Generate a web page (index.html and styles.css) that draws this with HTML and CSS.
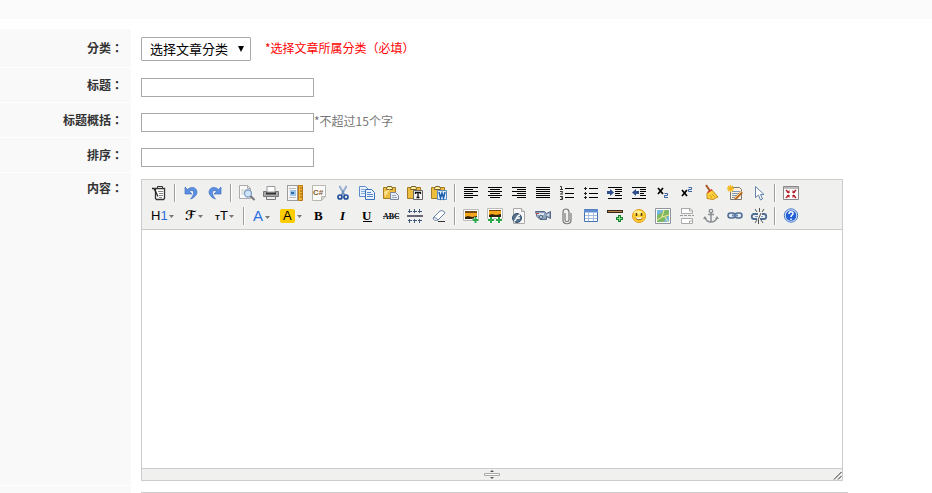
FILE: index.html
```html
<!DOCTYPE html>
<html lang="zh-Hant">
<head>
    <meta charset="UTF-8">
    <meta name="viewport" content="width=device-width, initial-scale=1.0">
    <title>文章</title>
    <link rel="stylesheet" href="styles.css">
</head>
<body>
    <div class="topbar"></div>

    <form class="article-form">
        <div class="row row-category">
            <label class="name" for="category">分类：</label>
            <div class="field">
                <span class="select-box">
                    <select id="category">
                        <option>选择文章分类</option>
                    </select>
                </span>
                <span class="required">*选择文章所属分类（必填）</span>
            </div>
        </div>
        <div class="row">
            <label class="name" for="title">标题：</label>
            <div class="field"><input type="text" id="title"></div>
        </div>
        <div class="row">
            <label class="name" for="summary">标题概括：</label>
            <div class="field"><input type="text" id="summary"><span class="tip">*不超过15个字</span></div>
        </div>
        <div class="row">
            <label class="name" for="sort">排序：</label>
            <div class="field"><input type="text" id="sort"></div>
        </div>

        <div class="row row-content">
            <label class="name" for="content">内容：</label>
            <div class="field">
                <div class="editor">
                    <div class="toolbar">
                        <!-- first line of tools -->
                        <div class="tools">
                            <button type="button" title="HTML代码"><svg width="16" height="16"><path d="M4.500 3.500h9v10l-1 1h-7l-1-1z" fill="#fff" stroke="#333" stroke-width="1.300"/><path d="M6.500 1.500h5v2h-5z" fill="#ddd" stroke="#333"/><path d="M7 6.500h5M8 8.500h4M8 10.500h4M8 12.500h3" stroke="#888"/><path d="M1 3.500h2l4 8" fill="none" stroke="#222" stroke-width="1.300"/></svg></button>
                            <span class="sep"></span>
                            <button type="button" title="后退"><svg width="16" height="16"><path d="M2 2v7h7L6.500 6.500C9 4.500 11 6 10.500 8.500 10 11 9 12 7.500 14 11 13 14 10 14 7 13.500 2 8 1 4.500 4.500z" fill="#5b8fe0" stroke="#2f65bd" stroke-width=".6"/></svg></button>
                            <button type="button" title="前进"><svg width="16" height="16"><path d="M14 2v7H7l2.500-2.500C7 4.500 5 6 5.500 8.500 6 11 7 12 8.500 14 5 13 2 10 2 7 2.500 2 8 1 11.500 4.500z" fill="#5b8fe0" stroke="#2f65bd" stroke-width=".6"/></svg></button>
                            <span class="sep"></span>
                            <button type="button" title="预览"><svg width="16" height="16"><path d="M.5.5h8l3 3v10H.5z" fill="#fafafa" stroke="#aaa"/><path d="M8.500.5v3h3" fill="none" stroke="#aaa"/><path d="M2 5h6M2 7h5M2 9h4" stroke="#ccc"/><circle cx="9" cy="8.500" r="3.500" fill="#cfe5fa" stroke="#7f9fc5" stroke-width="1.300"/><path d="M11.500 11l4 4" stroke="#777" stroke-width="2"/></svg></button>
                            <button type="button" title="打印"><svg width="16" height="16"><path d="M4 1.500h8V7H4z" fill="#fff" stroke="#999"/><path d="M.5 6.500h3v2h9v-2h3v5H.5z" fill="#aaa" stroke="#777"/><path d="M3 8.500h10" stroke="#333" stroke-width="2"/><path d="M3.500 11.500h9v3h-9z" fill="#eee" stroke="#777"/></svg></button>
                            <button type="button" title="插入模板"><svg width="16" height="16"><path d="M.5.5h10v15H.5z" fill="#f6f6f6" stroke="#444" stroke-dasharray="1 1"/><path d="M3 5h6v6H3z" fill="#9fc3e8"/><path d="M4 7h3v2H4z" fill="#316aa8"/><path d="M2 3.500h7M2 12.500h7" stroke="#bbb"/><path d="M11.500.5h4v15h-4z" fill="#f3b735" stroke="#b97812"/><path d="M13 3h2M13 6h2M13 9h2M13 12h2" stroke="#8b5710"/></svg></button>
                            <button type="button" title="插入程序代码"><svg width="16" height="16"><path d="M1.500.5h13v11l-4 4h-9z" fill="#fbfbfa" stroke="#b8b6ad"/><path d="M10.500 15.500v-4h4z" fill="#ddd" stroke="#b8b6ad"/><text class="code-mark" x="2" y="10">C#</text></svg></button>
                            <button type="button" title="剪切"><svg width="16" height="16"><path d="M4.500 1l5 9M11.500 1l-5 9" stroke="#6e8fbd" stroke-width="1.700"/><path d="M5 1l2 5M11 1L9 6" stroke="#c8d8ea" stroke-width=".7"/><circle cx="5" cy="12" r="2" fill="none" stroke="#234f9b" stroke-width="1.700"/><circle cx="11" cy="12" r="2" fill="none" stroke="#234f9b" stroke-width="1.700"/></svg></button>
                            <button type="button" title="复制"><svg width="16" height="16"><path d="M.5 1.500h6l3 3v7h-9z" fill="#e8f1fd" stroke="#5c8acb"/><path d="M2 4.500h4M2 6.500h5M2 8.500h4" stroke="#83a9dc"/><path d="M6.500 4.500h6l3 3v7h-9z" fill="#e8f1fd" stroke="#3d70bc"/><path d="M8 7.500h4M8 9.500h6M8 11.500h6" stroke="#5688cc"/></svg></button>
                            <button type="button" title="粘贴"><svg width="16" height="16"><path d="M.5 2.500h12v11H.5z" fill="#edbd40" stroke="#a47a22"/><path d="M3.500 3.500l1-2h4l1 2v1h-6z" fill="#fff0a2" stroke="#765c25"/><path d="M1 7l6-3-5 8z" fill="#fbe192"/><path d="M7.500 7.500h5l3 3v4h-8z" fill="#e7edf3" stroke="#7886a0"/><path d="M9 10.500h4M9 12.500h5" stroke="#98a5ba"/></svg></button>
                            <button type="button" title="粘贴为无格式文本"><svg width="16" height="16"><path d="M.5 2.500h13v11H.5z" fill="#edbd40" stroke="#a47a22"/><path d="M3.500 3.500l1-2h4l1 2v1h-6z" fill="#fff0a2" stroke="#765c25"/><path d="M6.500 5.500h9v9h-9z" fill="#f5f5f5" stroke="#666"/><path d="M8.500 9v-1.500h5V9M11 7.500v5M9.500 12.500h3" fill="none" stroke="#111" stroke-width="1.300"/></svg></button>
                            <button type="button" title="从Word粘贴"><svg width="16" height="16"><path d="M.5 2.500h13v11H.5z" fill="#edbd40" stroke="#a47a22"/><path d="M3.500 3.500l1-2h4l1 2v1h-6z" fill="#fff0a2" stroke="#765c25"/><path d="M6.500 5.500h9v9h-9z" fill="#e7f2ff" stroke="#5c8cc5"/><path d="M8 7l1.500 6L11 8l1.500 5L14 7" fill="none" stroke="#1b5eae" stroke-width="1.500"/></svg></button>
                            <span class="sep"></span>
                            <button type="button" title="左对齐"><svg width="16" height="16"><path d="M1 2.500h14M1 4.500h9M1 6.500h14M1 8.500h9M1 10.500h14M1 12.500h9" stroke="#000"/></svg></button>
                            <button type="button" title="居中"><svg width="16" height="16"><path d="M1 2.500h14M3 4.500h10M1 6.500h14M3 8.500h10M1 10.500h14M3 12.500h10" stroke="#000"/></svg></button>
                            <button type="button" title="右对齐"><svg width="16" height="16"><path d="M1 2.500h14M6 4.500h9M1 6.500h14M6 8.500h9M1 10.500h14M6 12.500h9" stroke="#000"/></svg></button>
                            <button type="button" title="两端对齐"><svg width="16" height="16"><path d="M1 2.500h14M1 4.500h14M1 6.500h14M1 8.500h14M1 10.500h14M1 12.500h14" stroke="#000"/></svg></button>
                            <button type="button" title="编号"><svg width="16" height="16"><path d="M6 3.500h9M6 8.500h9M6 12.500h9" stroke="#000"/><path d="M1 1.500h1.500v3M1 4.500h3M1 6.500h2.500v1L1.500 9H4M1 11.500h2.500v3H1M2 13h1.500" fill="none" stroke="#333"/></svg></button>
                            <button type="button" title="项目符号"><svg width="16" height="16"><path d="M6 3.500h9M6 8.500h9M6 12.500h9" stroke="#000"/><path d="M1 3.500h3M1 8.500h3M1 12.500h3M2.500 2v3M2.500 7v3M2.500 11v3" stroke="#222"/></svg></button>
                            <button type="button" title="增加缩进"><svg width="16" height="16"><path d="M1 2.500h14M8 4.500h7M8 6.500h7M8 8.500h5M8 10.500h7M1 13.500h14" stroke="#000"/><path d="M0 6h3V4l4 3.500L3 11V9H0z" fill="#304f8d"/></svg></button>
                            <button type="button" title="减少缩进"><svg width="16" height="16"><path d="M1 2.500h14M9 4.500h6M9 6.500h6M9 8.500h4M9 10.500h6M1 13.500h14" stroke="#000"/><path d="M8 6H5V4L1 7.500 5 11V9h3z" fill="#304f8d"/></svg></button>
                            <button type="button" title="下标"><svg width="16" height="16"><path d="M3 3l5 6M8 3L3 9" stroke="#000" stroke-width="1.700"/><path d="M9.500 8.500h3v2h-3v2h3.500" fill="none" stroke="#3c62a6"/></svg></button>
                            <button type="button" title="上标"><svg width="16" height="16"><path d="M3 5l5 6M8 5l-5 6" stroke="#000" stroke-width="1.700"/><path d="M9.500 2.500h3v2h-3v2h3.500" fill="none" stroke="#3c62a6"/></svg></button>
                            <button type="button" title="清理HTML代码"><svg width="16" height="16"><path d="M3 0l4 6" stroke="#a65928" stroke-width="2"/><path d="M4 8l5-3 6 7-5 2.500-6-1z" fill="#ffd13c" stroke="#c88b1b"/><path d="M4.500 7.500l4.500-3" stroke="#d63e25" stroke-width="1.500"/><path d="M7 10l2 3M9 9l3 3" stroke="#d19a22"/></svg></button>
                            <button type="button" title="一键排版"><svg width="16" height="16"><path d="M3.500 2.500h9l2 2v10h-11z" fill="#fff0d5" stroke="#777"/><path d="M5 6.500h8M5 8.500h7M5 10.500h6M5 12.500h4" stroke="#779bc4"/><path d="M3.500 0v7M0 3.500h7M1 1l5 5M6 1L1 6" stroke="#f3b619" stroke-width="1.300"/><path d="M15 7l-7 7" stroke="#b36527" stroke-width="2.500"/><path d="M14.500 6.500l-7 7" stroke="#ffd077"/></svg></button>
                            <button type="button" title="全选"><svg width="16" height="16"><path d="M4.500 1.500v11l3-2.500 2 5 2-1-2-4.500h3.500z" fill="#fff" stroke="#6482ac"/></svg></button>
                            <span class="sep"></span>
                            <button type="button" title="全屏显示"><svg width="16" height="16"><path d="M.5 1.500h15v13H.5z" fill="#fff" stroke="#888"/><path d="M1 3h14" stroke="#bbb" stroke-width="2"/><path d="M6.500 5v3h-3zM9.500 5v3h3zM6.500 13v-3h-3zM9.500 13v-3h3z" fill="#b81f26"/><path d="M3 5l3 3M13 5l-3 3M3 13l3-3M13 13l-3-3" stroke="#b81f26" stroke-width="1.500"/></svg></button>
                        </div>
                        <!-- second line of tools -->
                        <div class="tools">
                            <button type="button" title="段落"><svg width="25" height="16"><text x="0" y="12">H<tspan class="blue">1</tspan></text><path d="M18 7h5l-2.500 3z" fill="#777"/></svg></button>
                            <button type="button" title="字体"><svg width="21" height="16"><text class="script" x="1" y="12">ℱ</text><path d="M14 7h5l-2.500 3z" fill="#777"/></svg></button>
                            <button type="button" title="文字大小"><svg width="23" height="16"><text x="2" y="12"><tspan class="small">T</tspan>T</text><path d="M16 7h5l-2.500 3z" fill="#777"/></svg></button>
                            <span class="sep"></span>
                            <button type="button" title="文字颜色"><svg width="20" height="16"><text class="blue large" x="1" y="13">A</text><path d="M13 8h5l-2.500 3z" fill="#777"/></svg></button>
                            <button type="button" title="文字背景"><svg width="23" height="16"><rect x="0" y="1" width="15" height="14" rx="2" fill="#fc0"/><text x="3" y="12">A</text><path d="M17 7h5l-2.500 3z" fill="#777"/></svg></button>
                            <button type="button" title="粗体"><svg width="16" height="16"><text class="serif" x="3" y="12">B</text></svg></button>
                            <button type="button" title="斜体"><svg width="16" height="16"><text class="serif italic" x="5" y="12">I</text></svg></button>
                            <button type="button" title="下划线"><svg width="16" height="16"><text class="serif" x="3" y="12">U</text><path d="M4 13.500h9" stroke="#000"/></svg></button>
                            <button type="button" title="删除线"><svg width="16" height="16"><text class="strike" x="0" y="11">ABC</text><path d="M0 8.500h16" stroke="#345"/></svg></button>
                            <button type="button" title="行距"><svg width="16" height="16"><path d="M0 8h16" stroke="#667" stroke-width="2"/><path d="M1 3.500h4M6 3.500h4M11 3.500h4M1 12.500h4M6 12.500h4M11 12.500h4" stroke="#405a7d"/><path d="M2.500 1v4M7.500 1v4M12.500 1v4M2.500 11v4M7.500 11v4M12.500 11v4" stroke="#405a7d"/></svg></button>
                            <button type="button" title="删除格式"><svg width="16" height="16"><path d="M2 10l7-7c1-1 5 0 5 2l-7 7c-2 1-5 0-5-2z" fill="#fff" stroke="#6881a5"/><path d="M2 10c2-1 4 0 5 2" fill="none" stroke="#6881a5"/><path d="M7 13.500h7" stroke="#333"/></svg></button>
                            <span class="sep"></span>
                            <button type="button" title="图片"><svg width="16" height="16"><path d="M.5 1.500h15v11H.5z" fill="#fff" stroke="#bbb"/><path d="M2 3h12v8H2z" fill="#f6a719"/><path d="M2 9l3-1 4 1 5-1v3H2z" fill="#30230c"/><path d="M2 3h12v2H2z" fill="#754c18"/><path d="M12.500 9v6M9.500 12h6" stroke="#fff" stroke-width="3"/><path d="M12.500 9v6M9.500 12h6" stroke="#2aa84a" stroke-width="2"/></svg></button>
                            <button type="button" title="批量图片上传"><svg width="16" height="16"><path d="M.5.500h15v10H.5z" fill="#fff" stroke="#bbb"/><path d="M2 2h12v7H2z" fill="#f6a719"/><path d="M2 7l3-1 4 1 5-1v3H2z" fill="#30230c"/><path d="M2 2h12v1H2z" fill="#754c18"/><path d="M4 9v6M1 12h6M12 9v6M9 12h6" stroke="#fff" stroke-width="3"/><path d="M4 9v6M1 12h6M12 9v6M9 12h6" stroke="#2aa84a" stroke-width="2"/></svg></button>
                            <button type="button" title="Flash"><svg width="16" height="16"><path d="M2.500.5h8l3 3v12h-11z" fill="#f8f8f8" stroke="#aaa"/><path d="M10.500.5v3h3" fill="#ddd" stroke="#aaa"/><circle cx="6" cy="10" r="4.500" fill="#58748e" stroke="#304d6a"/><path d="M3 13c3 0 2-6 6-6M5 10h4" fill="none" stroke="#fff" stroke-width="1.500"/></svg></button>
                            <button type="button" title="视音频"><svg width="16" height="16"><path d="M.5 3.500h9l2 2 4-2v7l-4-2v3H5l-3-3z" fill="#8ea3bd" stroke="#506682"/><path d="M2 5h7v2H2z" fill="#d5e0ec"/><circle cx="6" cy="9" r="1.500" fill="#e8edf3" stroke="#49617f"/><path d="M12 6.500l2-1v3l-2-1z" fill="#d5e0ec"/><path d="M1 5.500h3" stroke="#b44"/></svg></button>
                            <button type="button" title="插入文件"><svg width="16" height="16"><path d="M6 5v7c0 2 4 2 4 0V4c0-4-6-4-6 0v8c0 5 8 5 8 0V5" fill="none" stroke="#777" stroke-width="1.200"/></svg></button>
                            <button type="button" title="表格"><svg width="16" height="16"><path d="M1.500 1.500h13v12h-13z" fill="#fff" stroke="#4774b5"/><path d="M1 3h14" stroke="#5e8ed1" stroke-width="3"/><path d="M5.500 5v8M10.500 5v8M2 7.500h12M2 10.500h12" stroke="#a4bddf"/></svg></button>
                            <button type="button" title="插入横线"><svg width="16" height="16"><path d="M0 2h16v3H0z" fill="#362718"/><path d="M1 3.500h14" stroke="#b98a54"/><path d="M12.500 7v7M9 10.500h7" stroke="#178332" stroke-width="3"/><path d="M12.500 8v5M10 10.500h5" stroke="#83df87"/></svg></button>
                            <button type="button" title="插入表情"><svg width="16" height="16"><circle cx="8" cy="8" r="6.500" fill="#ffd033" stroke="#e69b16"/><ellipse cx="7" cy="4.500" rx="4" ry="2" fill="#ffec8a"/><path d="M5.500 5v3M10.500 5v3" stroke="#573b0b" stroke-width="1.500"/><path d="M4 9.500c2 3 6 3 8 0" fill="#fff" stroke="#9b5f13"/></svg></button>
                            <button type="button" title="百度地图"><svg width="16" height="16"><path d="M.5.5h15v15H.5z" fill="#fff" stroke="#8e969b"/><path d="M2 2h12v12H2z" fill="#78b5e2"/><path d="M2 7l4-2 3-3h5v6l-3 1-2 5H2z" fill="#7fb865"/><path d="M2 12l5-3 2-7M7 9l7-2M10 9l3 5" fill="none" stroke="#f7eb9a"/></svg></button>
                            <button type="button" title="插入分页符"><svg width="16" height="16"><path d="M2.500 0v5.500h11v-3L11 .5H3M2.500 15.500v-5h11v5z" fill="#fff" stroke="#aaa"/><path d="M10.500 0v3h3M10.500 15v-2h3" fill="none" stroke="#aaa"/><path d="M1 7.500h14" stroke="#999" stroke-dasharray="3 1"/></svg></button>
                            <button type="button" title="锚点"><svg width="16" height="16"><circle cx="8" cy="3" r="1.700" fill="none" stroke="#8a9096" stroke-width="1.300"/><path d="M8 5v9M5 6.500h6M2 9c0 3 3 5 6 5s6-2 6-5" fill="none" stroke="#8a9096" stroke-width="1.500"/><path d="M0 11l2-3 2 3zM16 11l-2-3-2 3z" fill="#8a9096"/></svg></button>
                            <button type="button" title="超级链接"><svg width="16" height="16"><rect x="1" y="5" width="7" height="5" rx="2.500" fill="#e4ebf3" stroke="#4e6c94" stroke-width="1.500"/><rect x="8" y="5" width="7" height="5" rx="2.500" fill="#e4ebf3" stroke="#4e6c94" stroke-width="1.500"/><path d="M5 7.500h6" stroke="#6788b3" stroke-width="2"/></svg></button>
                            <button type="button" title="取消超级链接"><svg width="16" height="16"><path d="M7 6H3C0 6 0 11 3 11h3M9 11h4c3 0 3-5 0-5h-2" fill="none" stroke="#4e6c94" stroke-width="1.800"/><path d="M4 8.500h3M10 8.500h2" stroke="#7d9bc1"/><path d="M8.500 0v4M4 1l2 3M13 1l-2 3M7.500 12v4M4 15l2-3M12 15l-2-3M10 5l-3 7" stroke="#555"/></svg></button>
                            <span class="sep"></span>
                            <button type="button" title="关于"><svg width="16" height="16"><circle cx="8" cy="7.500" r="6.700" fill="#dce9ff" stroke="#4678c6"/><circle cx="8" cy="7.500" r="5.300" fill="#2460d6"/><path d="M6 6c0-3 4-3 4-.5 0 1.500-2 1.500-2 3.500M8 10.500V12" fill="none" stroke="#fff" stroke-width="1.500"/></svg></button>
                        </div>
                    </div>
                    <textarea id="content" class="edit-area"></textarea>
                    <div class="statusbar">
                        <span></span>
                        <svg width="16" height="11"><path d="M8 1l2 2H6zM8 10l2-2H6z" fill="#555"/><path d="M.5 4.500h15v2H.5z" fill="#fff" stroke="#aaa"/></svg>
                        <svg class="grip" width="11" height="11"><path d="M3 10.500L10.500 3M7 10.500L10.500 7" stroke="#333"/></svg>
                    </div>
                </div>
            </div>
        </div>

        <div class="row row-source">
            <div class="name"></div>
            <div class="field"><textarea class="source" aria-label="内容"></textarea></div>
        </div>
    </form>
</body>
</html>
```
FILE: styles.css
```css
* {
    box-sizing: border-box;
}
body {
    display: flex;
    flex-direction: column;
    margin: 0;
    height: 100vh;
    overflow: hidden;
    background: #fff;
    color: #333;
    font: 12px/18px "Noto Sans CJK TC", "Noto Sans", sans-serif;
}
.topbar {
    flex: none;
    height: 19px;
    margin-bottom: 10px;
    background: #fbfbfb;
}
.article-form {
    display: flex;
    flex-direction: column;
    flex: 1;
    min-height: 0;
}
.row {
    display: flex;
    flex: none;
}
.name {
    display: flex;
    justify-content: flex-end;
    align-items: center;
    flex: 0 0 131px;
    padding-right: 8px;
    background: #f9f9f9;
    border-bottom: 1px solid #fff;
    font-weight: bold;
}
.field {
    display: flex;
    align-items: center;
    flex: 1;
    padding: 10px 10px 6px;
}
.row-category .field {
    padding-top: 8px;
    padding-bottom: 7px;
}
.row-content .name {
    align-items: flex-start;
    padding-top: 6px;
}
.row-content .field {
    padding-top: 6px;
    padding-bottom: 5px;
}
/* takes whatever height is left in the window */
.row-source {
    flex: 1;
    min-height: 0;
    overflow: hidden;
}
.row-source .name {
    border-bottom: 0;
}
.row-source .field {
    align-items: stretch;
    padding-top: 6px;
    padding-bottom: 0;
}
input {
    width: 173px;
    height: 19px;
    padding: 1px 2px;
    border: 1px solid #a9a9a9;
    background: #fff;
}
.select-box {
    position: relative;
    margin-right: 14px;
}
.select-box::after {
    content: "";
    position: absolute;
    right: 7px;
    top: 9px;
    border: 3px solid transparent;
    border-top: 6px solid #000;
    border-bottom: 0;
    pointer-events: none;
}
select {
    display: block;
    width: 110px;
    height: 24px;
    padding: 0 8px 2px;
    appearance: none;
    border: 1px solid #a9a9a9;
    border-radius: 1px;
    background: #fff;
    color: #000;
    font: 13px "Noto Sans CJK SC", sans-serif;
}
.required, .tip {
    margin-bottom: 3px;
    line-height: 16px;
}
.required {
    color: #f00;
}
.tip {
    color: #777;
}

/* editor */
.editor {
    width: 100%;
    max-width: 702px;
    border: 1px solid #ccc;
}
.toolbar {
    padding: 2px 5px 1px;
    background: #f0f0ee;
    border-bottom: 1px solid #ccc;
}
.tools {
    display: flex;
    height: 23px;
}
.tools button {
    height: 20px;
    margin: 1px;
    padding: 1px 2px;
    border: 1px solid transparent;
    background: none;
    cursor: pointer;
}
.tools button:hover {
    border-color: #5690d2;
    background: #e9eff6;
}
.tools svg {
    display: block;
    overflow: visible;
}
.tools text {
    font: 13px "Liberation Sans", Arial, sans-serif;
    fill: #000;
}
.tools .blue {
    fill: #2a6ee0;
}
.tools .large {
    font-size: 15px;
}
.tools .small {
    font-size: 8px;
    font-weight: bold;
}
.tools .script {
    font: bold 13px "DejaVu Sans", sans-serif;
}
.tools .serif {
    font: bold 13px "Liberation Serif", serif;
}
.tools .italic {
    font-style: italic;
}
.tools .strike {
    font: bold 8px "Liberation Serif", serif;
}
.tools .code-mark {
    font: bold 8px "Liberation Sans", Arial, sans-serif;
    fill: #8b5a2b;
}
.sep {
    width: 2px;
    height: 18px;
    margin: 2px 3px;
    border-left: 1px solid #a0a0a0;
    border-right: 1px solid #fff;
}
.edit-area {
    display: block;
    width: 100%;
    height: 238px;
    padding: 5px;
    border: 0;
    outline: none;
    resize: none;
}
.statusbar {
    display: grid;
    grid-template-columns: 1fr auto 1fr;
    height: 12px;
    background: #f0f0ee;
    border-top: 1px solid #ccc;
}
.grip {
    justify-self: end;
}
.source {
    width: 100%;
    max-width: 707px;
    height: 100%;
    padding: 0;
    border: 1px solid #ccc;
    resize: none;
}
```
